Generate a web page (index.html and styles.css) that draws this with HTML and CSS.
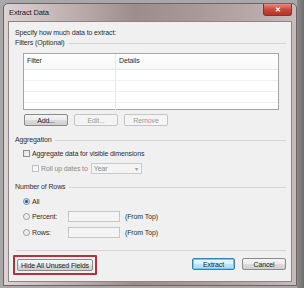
FILE: index.html
```html
<!DOCTYPE html>
<html lang="en">
  <head>
    <meta charset="UTF-8" />
    <title>Extract Data</title>
    <link rel="stylesheet" href="styles.css">
  </head>
  <body>
    <div class="window">
      <div class="titlebar">
        <span class="title">Extract Data</span>
        <span class="close">✕</span>
      </div>
      <div class="client">
        <div class="intro">Specify how much data to extract:</div>

        <div class="group-label"><span>Filters (Optional)</span></div>
        <div class="listbox">
          <div class="lb-head">
            <span class="col1">Filter</span>
            <span class="col2">Details</span>
          </div>
          <div class="lb-row"><span class="col1"></span><span class="col2"></span></div>
          <div class="lb-row"><span class="col1"></span><span class="col2"></span></div>
          <div class="lb-row"><span class="col1"></span><span class="col2"></span></div>
          <div class="lb-row last"><span class="col1"></span><span class="col2"></span></div>
        </div>
        <div class="btn-row">
          <button class="btn">Add...</button>
          <button class="btn disabled">Edit...</button>
          <button class="btn disabled">Remove</button>
        </div>

        <div class="group-label agg"><span>Aggregation</span></div>
        <div class="check-row first">
          <span class="checkbox"></span>
          <span>Aggregate data for visible dimensions</span>
        </div>
        <div class="check-row sub">
          <span class="checkbox disabled"></span>
          <span class="muted">Roll up dates to</span>
          <span class="combo"><span>Year</span><span class="arrow">▾</span></span>
        </div>

        <div class="group-label rows"><span>Number of Rows</span></div>
        <div class="radio-row all">
          <span class="radio checked"></span>
          <span>All</span>
        </div>
        <div class="radio-row field">
          <span class="radio"></span>
          <span class="radio-label">Percent:</span>
          <span class="textbox"></span>
          <span>(From Top)</span>
        </div>
        <div class="radio-row field">
          <span class="radio"></span>
          <span class="radio-label">Rows:</span>
          <span class="textbox"></span>
          <span>(From Top)</span>
        </div>

        <hr />

        <div class="footer">
          <div class="highlight">
            <button class="btn wide">Hide All Unused Fields</button>
          </div>
          <div class="footer-right">
            <button class="btn default">Extract</button>
            <button class="btn">Cancel</button>
          </div>
        </div>
      </div>
    </div>
  </body>
</html>
```

FILE: styles.css
```css
body {
  margin: 0;
  width: 304px;
  height: 288px;
  overflow: hidden;
  font-family: "Liberation Sans", Arial, sans-serif;
  font-size: 7px;
  letter-spacing: -0.12px;
  color: #2e2e2e;
  background: linear-gradient(to right, #a8a8a8 0, #a8a8a8 297px, #8a8a8a 297px, #6e6e6e 304px);
}
.window {
  margin: 3px 0 0 3px;
  width: 294px;
  height: 283px;
  box-sizing: border-box;
  border: 1px solid #6d6466;
  border-radius: 5px 5px 0 0;
  background: linear-gradient(to right, #dcd3d3, #bcacac 25%, #9c8c8c 45%, #a89898 65%, #b8a9a9 85%, #c8bcbc);
  display: flex;
  flex-direction: column;
}
.titlebar {
  height: 17px;
  display: flex;
  align-items: flex-start;
  justify-content: space-between;
  padding-left: 5px;
}
.title {
  margin-top: 4px;
  font-size: 7.5px;
  color: #1a1a1a;
}
.close {
  width: 27px;
  height: 11px;
  margin-right: 4px;
  border: 1px solid #7a3a32;
  border-top: none;
  border-radius: 0 0 3px 3px;
  background: linear-gradient(#e09080, #c8483a 50%, #b83426);
  color: #fff;
  font-size: 7px;
  font-weight: 700;
  text-align: center;
  line-height: 11px;
}
.client {
  flex: 1;
  margin: 0 4px 3px 4px;
  border: 1px solid #8d8585;
  background: #f0f0f0;
  padding: 0 5px 0 6px;
}
.intro {
  margin-top: 6px;
  height: 10px;
  line-height: 10px;
}
.group-label {
  display: flex;
  align-items: center;
  height: 10px;
  line-height: 10px;
}
.group-label::after {
  content: "";
  flex: 1;
  margin-left: 4px;
  border-top: 1px solid #d5d5d5;
}
.listbox {
  margin: 5px 7px 0 8px;
  height: 57px;
  box-sizing: border-box;
  border: 1px solid #a5a5a5;
  background: #fff;
}
.lb-head,
.lb-row {
  display: flex;
}
.lb-head {
  height: 15px;
  line-height: 14px;
  border-bottom: 1px solid #e5e5e5;
  background: linear-gradient(#fff, #f6f7f8);
}
.lb-row {
  height: 10px;
  border-bottom: 1px solid #f0f0f0;
}
.lb-row.last {
  border-bottom: none;
}
.col1 {
  width: 88px;
  padding-left: 3px;
  border-right: 1px solid #e8e8e8;
}
.col2 {
  flex: 1;
  padding-left: 3px;
}
.btn-row {
  display: flex;
  gap: 6px;
  margin: 4px 0 0 9px;
}
.btn {
  width: 44px;
  height: 12px;
  padding: 0;
  box-sizing: border-box;
  border: 1px solid #8a8a8a;
  border-radius: 2px;
  background: linear-gradient(#f4f4f4 0, #ebebeb 50%, #dcdcdc 51%, #cfcfcf 100%);
  font-family: inherit;
  font-size: 7px;
  letter-spacing: inherit;
  color: #1e1e1e;
}
.btn.disabled {
  border-color: #c4c4c4;
  background: #f4f4f4;
  color: #9a9a9a;
}
.btn.default {
  width: 43px;
  border-color: #3c7fb1;
  box-shadow: inset 0 0 0 1px #6fcaf0;
  background: linear-gradient(#eaf6fd 0, #d9f0fc 50%, #bee6fd 51%, #a7d9f5 100%);
}
.btn.wide {
  width: 76px;
}
.group-label.agg {
  margin-top: 9px;
}
.check-row,
.radio-row {
  display: flex;
  align-items: center;
}
.check-row.first {
  margin: 3px 0 0 8px;
  height: 10px;
}
.check-row.sub {
  margin: 5px 0 0 17px;
  height: 11px;
}
.checkbox {
  width: 7px;
  height: 7px;
  box-sizing: border-box;
  border: 1px solid #8e8f8f;
  background: linear-gradient(135deg, #dcdcdc, #fafafa);
  margin-right: 2px;
}
.checkbox.disabled {
  border-color: #c0c0c0;
  background: #f4f4f4;
}
.muted {
  color: #8c8c8c;
}
.combo {
  margin-left: 3px;
  width: 51px;
  height: 11px;
  box-sizing: border-box;
  border: 1px solid #cacaca;
  background: #f4f4f4;
  color: #8c8c8c;
  display: flex;
  align-items: center;
  justify-content: space-between;
  padding: 0 3px 0 2px;
}
.arrow {
  font-size: 6px;
  color: #9a9a9a;
}
.group-label.rows {
  margin-top: 8px;
}
.radio-row.all {
  margin: 4px 0 0 8px;
  height: 10px;
}
.radio-row.field {
  margin: 5px 0 0 8px;
  height: 11px;
}
.radio-row.field:first-of-type {
  margin-top: 6px;
}
.radio {
  width: 7px;
  height: 7px;
  box-sizing: border-box;
  border: 1px solid #9a9a9a;
  border-radius: 50%;
  background: radial-gradient(circle, #e8e8e8, #f8f8f8);
  margin-right: 2px;
}
.radio.checked {
  border-color: #7c8d9e;
  background: radial-gradient(circle, #1d5a8a 0, #4d8ec2 1.6px, #dfe8ef 2.2px);
}
.radio-label {
  width: 36px;
}
.textbox {
  width: 52px;
  height: 11px;
  box-sizing: border-box;
  border: 1px solid #c6c6c6;
  background: #f4f4f4;
  margin-right: 5px;
}
hr {
  border: 0;
  height: 1px;
  background: #d5d5d5;
  margin: 12px 0 0 1px;
}
.footer {
  display: flex;
  justify-content: space-between;
  align-items: flex-start;
  margin-top: 4px;
}
.highlight {
  margin-left: -2px;
  padding: 2px;
  border: 2px solid #b0343e;
  border-radius: 1px;
}
.footer-right {
  display: flex;
  gap: 7px;
  margin-top: 3px;
}
```
